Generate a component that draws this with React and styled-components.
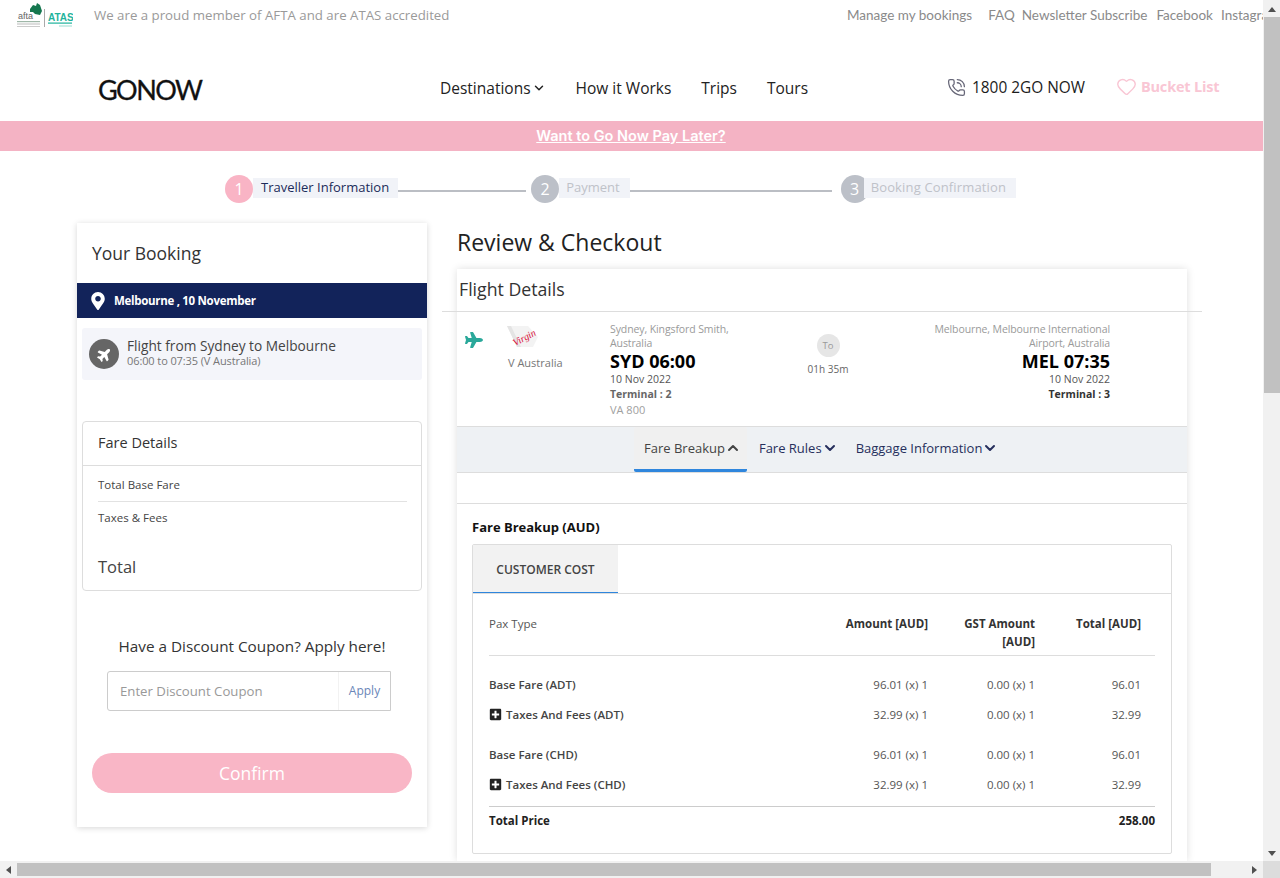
import React from 'react';
import styled, { createGlobalStyle } from 'styled-components';
import { FaMapMarkerAlt, FaPlane, FaPlusSquare } from 'react-icons/fa';
import { ChevronDown, ChevronUp, Heart, PhoneCall } from 'lucide-react';

const GlobalStyle = createGlobalStyle`
  html, body {
    margin: 0;
    padding: 0;
    overflow: hidden;
    background: #fff;
  }
  * { box-sizing: border-box; }
  body {
    font-family: "Open Sans", "Noto Sans", Arial, sans-serif;
    color: #333;
  }
`;

const Screen = styled.div`
  width: 1280px;
  height: 878px;
  display: grid;
  grid-template-columns: 1263px 17px;
  grid-template-rows: 861px 17px;
  overflow: hidden;
`;

const Viewport = styled.div`
  overflow: hidden;
  background: #fff;
`;

/* fake browser scrollbars */
const VBar = styled.div`
  background: #f1f1f1;
  display: flex;
  flex-direction: column;
  align-items: center;
  justify-content: space-between;
`;

const VThumb = styled.div`
  width: 16px;
  height: 376px;
  margin-left: 1px;
  background: #c1c1c1;
`;

const HBar = styled.div`
  background: #f1f1f1;
  display: flex;
  align-items: center;
  justify-content: space-between;
`;

const HThumb = styled.div`
  width: 1194px;
  height: 13px;
  background: #c1c1c1;
`;

const ArrowBox = styled.div`
  width: 17px;
  height: 17px;
  display: flex;
  align-items: center;
  justify-content: center;
  flex: none;
`;

const Corner = styled.div`
  background: #dcdcdc;
`;

const VStack = styled.div`
  width: 100%;
`;

const HStack = styled.div`
  display: flex;
  height: 100%;
  align-items: center;
`;

const TopBar = styled.div`
  height: 31px;
  display: flex;
  align-items: center;
  padding-left: 17px;
  white-space: nowrap;
  overflow: hidden;
`;

const AccreditMark = styled.svg`
  flex: none;
`;

const Accredit = styled.span`
  margin: -2px 0 0 21px;
  font-size: 13.25px;
  color: #9a9a9a;
  width: 753px;
  flex: none;
`;

const TopLinks = styled.div`
  display: flex;
  margin-top: -2px;
  font-family: "Lato", sans-serif;
  font-size: 13.5px;
  color: #8a8a8a;
`;

const TopLink = styled.span`
  margin-right: ${props => props.gap}px;
`;

const Header = styled.div`
  height: 90px;
  padding: 24px 0 0 98px;
  display: flex;
  align-items: center;
  white-space: nowrap;
`;

const Logo = styled.div`
  width: 104px;
  margin-top: 2px;
  font-family: "Lato", sans-serif;
  font-size: 27px;
  letter-spacing: -1.6px;
  -webkit-text-stroke: 0.3px #111;
  color: #111;
  flex: none;
`;

const Nav = styled.nav`
  margin-left: 238px;
  width: 507px;
  display: flex;
  gap: 30px;
  flex: none;
`;

const NavItem = styled.span`
  display: inline-flex;
  align-items: center;
  gap: 1px;
  font-size: 15.5px;
  font-weight: 500;
  color: #222;
`;

const Phone = styled.div`
  display: flex;
  align-items: center;
  gap: 6px;
  font-size: 15.4px;
  font-weight: 500;
  color: #1c1c1c;
  width: 169px;
  margin-top: -1px;
`;

const Bucket = styled.div`
  display: flex;
  align-items: center;
  gap: 4px;
  font-size: 14.5px;
  letter-spacing: -0.2px;
  font-weight: 700;
  color: #f9c6d4;
  margin-top: -3px;
`;

const PromoBar = styled.div`
  height: 30px;
  padding: 0 1px 2px 0;
  background: #f4b3c4;
  display: flex;
  align-items: center;
  justify-content: center;
`;

const PromoLink = styled.a`
  color: #fff;
  font-family: "Inter", sans-serif;
  font-size: 14.5px;
  font-weight: 600;
  text-decoration: underline;
`;

const Stepper = styled.div`
  margin: 24px 0 0 225px;
  height: 28px;
  display: flex;
  align-items: center;
`;

const StepDot = styled.div`
  width: 28px;
  height: 28px;
  border-radius: 50%;
  background: ${props => (props.active ? '#f9b4c5' : '#bcc0c8')};
  color: #fff;
  font-size: 16px;
  display: flex;
  align-items: center;
  justify-content: center;
  flex: none;
`;

const StepLabel = styled.div`
  position: relative;
  height: 20px;
  margin-top: -3px;
  margin-left: ${props => props.overlap || 0}px;
  padding: 0 ${props => props.right || 10}px 0 ${props => props.pad}px;
  background: #f1f3f8;
  font-size: 13px;
  letter-spacing: ${props => props.spread || 0}px;
  line-height: 19px;
  color: ${props => (props.active ? '#1c2c5a' : '#bfc2c9')};
  white-space: nowrap;
  flex: none;
`;

const StepLine = styled.div`
  width: ${props => props.width}px;
  height: 2px;
  margin: 4px ${props => props.after}px 0 0;
  background: #bbbec4;
  flex: none;
`;

const Main = styled.div`
  display: flex;
  align-items: flex-start;
  padding: 20px 0 0 77px;
`;

const SideCard = styled.aside`
  width: 350px;
  height: 604px;
  background: #fff;
  box-shadow: 0 1px 6px rgba(0, 0, 0, 0.16);
  flex: none;
`;

const SideTitle = styled.h2`
  margin: 0;
  height: 60px;
  padding: 17px 0 0 15px;
  font-size: 17.5px;
  line-height: 26px;
  font-weight: 500;
  color: #333;
`;

const CityBar = styled.div`
  height: 35px;
  padding-left: 12px;
  background: #12235a;
  color: #fff;
  font-size: 11.5px;
  letter-spacing: -0.3px;
  font-weight: 700;
  display: flex;
  align-items: center;
  gap: 7px;
`;

const FlightItem = styled.div`
  margin: 10px 5px 0;
  height: 52px;
  padding-left: 7px;
  background: #f4f5fa;
  border-radius: 3px;
  display: flex;
  align-items: center;
  gap: 8px;
`;

const PlaneCircle = styled.div`
  width: 30px;
  height: 30px;
  border-radius: 50%;
  background: #666;
  color: #fff;
  display: flex;
  align-items: center;
  justify-content: center;
  flex: none;
`;

const FlightText = styled.div`
  margin-top: -3px;
`;

const FlightTitle = styled.div`
  font-size: 13.7px;
  line-height: 16px;
  color: #444;
`;

const FlightSub = styled.div`
  font-size: 11px;
  letter-spacing: -0.1px;
  line-height: 13px;
  color: #777;
`;

const FareBox = styled.div`
  margin: 41px 5px 0;
  height: 170px;
  border: 1px solid #ddd;
  border-radius: 4px;
`;

const FareTitle = styled.div`
  height: 44px;
  padding-left: 15px;
  border-bottom: 1px solid #ddd;
  font-size: 14.5px;
  font-weight: 500;
  line-height: 42px;
  color: #333;
`;

const FareRow = styled.div`
  margin: 0 14px 0 15px;
  font-size: 11.5px;
  color: #444;
  height: ${props => props.height}px;
  line-height: ${props => props.lh}px;
  border-bottom: ${props => (props.divided ? '1px solid #e2e2e2' : 'none')};
`;

const FareTotal = styled.div`
  margin: 20px 0 0 15px;
  font-size: 16.5px;
  line-height: 26px;
  color: #444;
`;

const CouponTitle = styled.div`
  margin-top: 44px;
  text-align: center;
  font-size: 15.3px;
  line-height: 22px;
  color: #333;
`;

const CouponField = styled.div`
  margin: 14px 0 0 30px;
  width: 284px;
  height: 40px;
  border: 1px solid #ccc;
  border-radius: 3px 0 0 3px;
  display: flex;
  align-items: center;
  font-size: 13.2px;
`;

const CouponPlaceholder = styled.div`
  flex: 1;
  padding-left: 12px;
  color: #999;
`;

const CouponApply = styled.div`
  width: 52px;
  height: 100%;
  border-left: 1px solid #f2f2f2;
  font-size: 12px;
  line-height: 38px;
  text-align: center;
  color: #6a86b8;
`;

const ConfirmButton = styled.div`
  margin: 42px 0 0 15px;
  width: 320px;
  height: 40px;
  border-radius: 20px;
  background: #f9b6c6;
  color: #fff;
  font-size: 17.5px;
  line-height: 40px;
  text-align: center;
`;

const Content = styled.section`
  margin-left: 30px;
  width: 730px;
  flex: none;
`;

const PageTitle = styled.h1`
  margin: 3px 0 11px;
  font-size: 23px;
  line-height: 32px;
  font-weight: 400;
  color: #222;
`;

const DetailCard = styled.div`
  background: #fff;
  box-shadow: 0 0 8px rgba(0, 0, 0, 0.13);
`;

const DetailHeader = styled.div`
  margin: 0 -15px;
  height: 43px;
  padding: 7px 0 0 17px;
  border-bottom: 1px solid #ddd;
  font-size: 17.7px;
  line-height: 26px;
  font-weight: 500;
  color: #333;
`;

const FlightRow = styled.div`
  height: 115px;
  padding: 10px 0 0 8px;
  border-bottom: 1px solid #ddd;
  display: grid;
  grid-template-columns: 42px 103px 126px 184px 190px;
`;

const PlaneMark = styled.div`
  color: #2aa89a;
  font-size: 18px;
  padding-top: 8px;
`;

const AirlineCol = styled.div`
  padding-left: 1px;
  font-size: 11px;
  line-height: 16px;
  color: #777;
`;

const TailBox = styled.div`
  height: 26px;
  margin-bottom: 7px;
  margin-left: -1px;
`;

const AirportCol = styled.div`
  text-align: ${props => (props.right ? 'right' : 'left')};
`;

const AirportName = styled.div`
  font-size: 10.5px;
  letter-spacing: -0.1px;
  line-height: 14px;
  color: #9a9a9a;
`;

const AirportTime = styled.div`
  font-size: 18px;
  line-height: 22px;
  font-weight: 700;
  color: #000;
`;

const AirportDate = styled.div`
  font-size: 10.5px;
  line-height: 14px;
  color: #555;
`;

const Terminal = styled.div`
  margin-top: 1px;
  font-size: 10.5px;
  line-height: 15px;
  font-weight: 700;
  color: ${props => (props.right ? '#333' : '#666')};
`;

const FlightNo = styled.div`
  font-size: 11px;
  line-height: 15px;
  color: #a0a0a0;
`;

const DurationCol = styled.div`
  padding-top: 12px;
  display: flex;
  flex-direction: column;
  align-items: center;
`;

const ToBadge = styled.div`
  width: 23px;
  height: 23px;
  border-radius: 50%;
  background: #e6e6e6;
  color: #999;
  font-size: 9.5px;
  line-height: 23px;
  text-align: center;
`;

const Duration = styled.div`
  margin-top: 4px;
  font-size: 10px;
  line-height: 16px;
  color: #666;
`;

const TabRow = styled.div`
  height: 46px;
  padding-left: 177px;
  background: #eef1f4;
  border-bottom: 1px solid #ddd;
  display: flex;
`;

const DetailTab = styled.div`
  height: 45px;
  padding: 0 6px 0 ${props => (props.active ? '10px' : '12px')};
  background: ${props => (props.active ? '#f0f0f0' : 'transparent')};
  border-bottom: 3px solid ${props => (props.active ? '#2f86dd' : 'transparent')};
  border-radius: 2px;
  color: ${props => (props.active ? '#444' : '#262f5c')};
  font-size: 13px;
  line-height: 42px;
  display: flex;
  align-items: center;
  white-space: nowrap;
`;

const FareSection = styled.div`
  margin-top: 30px;
  height: 358px;
  padding: 14px 15px 0;
  border-top: 1px solid #ddd;
`;

const FareHeading = styled.div`
  font-size: 13px;
  line-height: 18px;
  font-weight: 700;
  color: #111;
  margin-bottom: 8px;
`;

const CostBox = styled.div`
  height: 310px;
  border: 1px solid #ddd;
  border-radius: 2px;
`;

const CostTabs = styled.div`
  height: 49px;
  border-bottom: 1px solid #ddd;
`;

const CostTab = styled.div`
  width: 145px;
  height: 48px;
  background: #f2f2f2;
  border-bottom: 1px solid #2f86dd;
  font-size: 12px;
  font-weight: 600;
  line-height: 49px;
  text-align: center;
  color: #444;
`;

const CostTable = styled.div`
  padding: 21px 16px 0;
`;

const CostGrid = styled.div`
  display: grid;
  grid-template-columns: 1fr 120px 107px 106px;
  padding-right: 14px;
  align-items: center;
`;

const HeadRow = styled(CostGrid)`
  padding-bottom: 4px;
  border-bottom: 1px solid #ddd;
  align-items: start;
  font-size: 11.5px;
  line-height: 18px;
`;

const HeadCell = styled.div`
  text-align: right;
  font-weight: 700;
  color: #333;
  padding-left: 20px;
`;

const PaxLabel = styled.div`
  color: #555;
`;

const FareBlock = styled.div`
  margin-top: ${props => props.top}px;
`;

const CostRow = styled(CostGrid)`
  height: 30px;
  font-size: 11.5px;
`;

const RowLabel = styled.div`
  display: flex;
  align-items: center;
  gap: 4px;
  font-weight: 600;
  color: #444;
`;

const PlusIcon = styled(FaPlusSquare)`
  color: #222;
  font-size: 13px;
`;

const ValueCell = styled.div`
  text-align: right;
  color: #555;
`;

const TotalRow = styled.div`
  margin-top: 7px;
  height: 27px;
  border-top: 1px solid #ccc;
  display: flex;
  align-items: center;
  justify-content: space-between;
  font-size: 11.5px;
  font-weight: 700;
  color: #222;
`;

const costs = [
  {
    key: 'adt',
    rows: [
      { label: 'Base Fare (ADT)', amount: '96.01 (x) 1', gst: '0.00 (x) 1', total: '96.01' },
      { label: 'Taxes And Fees (ADT)', amount: '32.99 (x) 1', gst: '0.00 (x) 1', total: '32.99', plus: true },
    ],
  },
  {
    key: 'chd',
    rows: [
      { label: 'Base Fare (CHD)', amount: '96.01 (x) 1', gst: '0.00 (x) 1', total: '96.01' },
      { label: 'Taxes And Fees (CHD)', amount: '32.99 (x) 1', gst: '0.00 (x) 1', total: '32.99', plus: true },
    ],
  },
];

const AccreditLogo = () => (
  <AccreditMark width="56" height="25" viewBox="0 0 56 25">
    <path d="M13 6 L16 2 L19 3 L20 0 L23 2 L25 8 L23 12 L18 11 L16 9 L13 9 Z" fill="#15774f" />
    <text x="1" y="16" fontSize="9" fontFamily="Liberation Sans" fill="#666">afta</text>
    <rect x="0" y="18" width="23" height="1.2" fill="#9fb7a8" />
    <rect x="0" y="20.5" width="23" height="1" fill="#bbb" />
    <rect x="0" y="23" width="23" height="1" fill="#ccc" />
    <rect x="27" y="6" width="1" height="18" fill="#aaa" />
    <text x="31" y="18" fontSize="10" fontWeight="700" fontFamily="Liberation Sans" fill="#1fb39c">ATAS</text>
    <rect x="31" y="19.5" width="24" height="1.2" fill="#1fb39c" />
    <rect x="42" y="22.5" width="13" height="1" fill="#9adbd0" />
  </AccreditMark>
);

const VirginTail = () => (
  <svg width="32" height="26" viewBox="0 0 32 26">
    <path d="M0 4 L21 4 L31 15 L26 25 L10 25 Z" fill="#f3f3f3" />
    <path d="M0 4 L10 25 L14 25 L4 4 Z" fill="#e4e4e4" />
    <text
      x="17"
      y="19"
      textAnchor="middle"
      fontSize="10"
      fontStyle="italic"
      fontFamily="Liberation Serif"
      fill="#d9103a"
      transform="rotate(-28 17 15)"
    >
      Virgin
    </text>
  </svg>
);

const Tri = ({ dir }) => {
  const points = {
    up: '4,2 8,7 0,7',
    down: '0,2 8,2 4,7',
    left: '6,0 6,8 1,4',
    right: '1,0 1,8 6,4',
  };
  return (
    <svg width="8" height="8" viewBox="0 0 8 8">
      <polygon points={points[dir]} fill="#505050" />
    </svg>
  );
};

export default function App() {
  return (
    <Screen>
      <GlobalStyle />
      <Viewport>
        <TopBar>
          <AccreditLogo />
          <Accredit>We are a proud member of AFTA and are ATAS accredited</Accredit>
          <TopLinks>
            <TopLink gap={16}>Manage my bookings</TopLink>
            <TopLink gap={7}>FAQ</TopLink>
            <TopLink gap={9}>Newsletter Subscribe</TopLink>
            <TopLink gap={8}>Facebook</TopLink>
            <TopLink gap={0}>Instagram</TopLink>
          </TopLinks>
        </TopBar>

        <Header>
          <Logo>GONOW</Logo>
          <Nav>
            <NavItem>Destinations <ChevronDown size={14} strokeWidth={2.5} /></NavItem>
            <NavItem>How it Works</NavItem>
            <NavItem>Trips</NavItem>
            <NavItem>Tours</NavItem>
          </Nav>
          <Phone>
            <PhoneCall size={19} color="#667" strokeWidth={1.6} />
            1800 2GO NOW
          </Phone>
          <Bucket>
            <Heart size={21} strokeWidth={1.6} />
            Bucket List
          </Bucket>
        </Header>

        <PromoBar>
          <PromoLink>Want to Go Now Pay Later?</PromoLink>
        </PromoBar>

        <Stepper>
          <StepDot active>1</StepDot>
          <StepLabel active pad={8} right={9}>Traveller Information</StepLabel>
          <StepLine width={128} after={5} />
          <StepDot>2</StepDot>
          <StepLabel pad={7}>Payment</StepLabel>
          <StepLine width={202} after={9} />
          <StepDot>3</StepDot>
          <StepLabel pad={7} overlap={-5} spread={0.15}>Booking Confirmation</StepLabel>
        </Stepper>

        <Main>
          <SideCard>
            <SideTitle>Your Booking</SideTitle>
            <CityBar>
              <FaMapMarkerAlt size={18} />
              Melbourne , 10 November
            </CityBar>
            <FlightItem>
              <PlaneCircle><FaPlane size={15} style={{ transform: 'rotate(-45deg)' }} /></PlaneCircle>
              <FlightText>
                <FlightTitle>Flight from Sydney to Melbourne</FlightTitle>
                <FlightSub>06:00 to 07:35 (V Australia)</FlightSub>
              </FlightText>
            </FlightItem>

            <FareBox>
              <FareTitle>Fare Details</FareTitle>
              <FareRow height={36} lh={38} divided>Total Base Fare</FareRow>
              <FareRow height={32} lh={31}>Taxes &amp; Fees</FareRow>
              <FareTotal>Total</FareTotal>
            </FareBox>

            <CouponTitle>Have a Discount Coupon? Apply here!</CouponTitle>
            <CouponField>
              <CouponPlaceholder>Enter Discount Coupon</CouponPlaceholder>
              <CouponApply>Apply</CouponApply>
            </CouponField>
            <ConfirmButton>Confirm</ConfirmButton>
          </SideCard>

          <Content>
            <PageTitle>Review &amp; Checkout</PageTitle>
            <DetailCard>
              <DetailHeader>Flight Details</DetailHeader>
              <FlightRow>
                <PlaneMark><FaPlane /></PlaneMark>
                <AirlineCol>
                  <TailBox><VirginTail /></TailBox>
                  V Australia
                </AirlineCol>
                <AirportCol>
                  <AirportName>Sydney, Kingsford Smith, Australia</AirportName>
                  <AirportTime>SYD 06:00</AirportTime>
                  <AirportDate>10 Nov 2022</AirportDate>
                  <Terminal>Terminal : 2</Terminal>
                  <FlightNo>VA 800</FlightNo>
                </AirportCol>
                <DurationCol>
                  <ToBadge>To</ToBadge>
                  <Duration>01h 35m</Duration>
                </DurationCol>
                <AirportCol right>
                  <AirportName>Melbourne, Melbourne International Airport, Australia</AirportName>
                  <AirportTime>MEL 07:35</AirportTime>
                  <AirportDate>10 Nov 2022</AirportDate>
                  <Terminal right>Terminal : 3</Terminal>
                </AirportCol>
              </FlightRow>

              <TabRow>
                <DetailTab active>Fare Breakup<ChevronUp size={16} strokeWidth={3} /></DetailTab>
                <DetailTab>Fare Rules<ChevronDown size={16} strokeWidth={3} /></DetailTab>
                <DetailTab>Baggage Information<ChevronDown size={16} strokeWidth={3} /></DetailTab>
              </TabRow>

              <FareSection>
                <FareHeading>Fare Breakup (AUD)</FareHeading>
                <CostBox>
                  <CostTabs><CostTab>CUSTOMER COST</CostTab></CostTabs>
                  <CostTable>
                    <HeadRow>
                      <PaxLabel>Pax Type</PaxLabel>
                      <HeadCell>Amount [AUD]</HeadCell>
                      <HeadCell>GST Amount [AUD]</HeadCell>
                      <HeadCell>Total [AUD]</HeadCell>
                    </HeadRow>
                    {costs.map((group, i) => (
                      <FareBlock key={group.key} top={i === 0 ? 13 : 10}>
                        {group.rows.map(row => (
                          <CostRow key={row.label}>
                            <RowLabel>{row.plus && <PlusIcon />}{row.label}</RowLabel>
                            <ValueCell>{row.amount}</ValueCell>
                            <ValueCell>{row.gst}</ValueCell>
                            <ValueCell>{row.total}</ValueCell>
                          </CostRow>
                        ))}
                      </FareBlock>
                    ))}
                    <TotalRow>
                      <span>Total Price</span>
                      <span>258.00</span>
                    </TotalRow>
                  </CostTable>
                </CostBox>
              </FareSection>
            </DetailCard>
          </Content>
        </Main>
      </Viewport>

      <VBar>
        <VStack>
          <ArrowBox><Tri dir="up" /></ArrowBox>
          <VThumb />
        </VStack>
        <ArrowBox><Tri dir="down" /></ArrowBox>
      </VBar>
      <HBar>
        <HStack>
          <ArrowBox><Tri dir="left" /></ArrowBox>
          <HThumb />
        </HStack>
        <ArrowBox><Tri dir="right" /></ArrowBox>
      </HBar>
      <Corner />
    </Screen>
  );
}
